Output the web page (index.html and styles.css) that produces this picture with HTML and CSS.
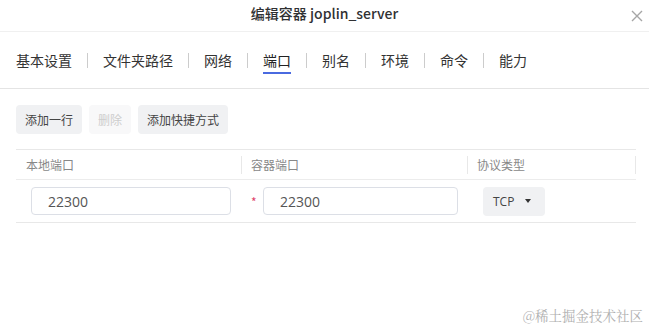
FILE: index.html
```html
<!DOCTYPE html>
<html lang="zh">
<head>
    <meta charset="UTF-8">
    <meta name="viewport" content="width=device-width, initial-scale=1.0">
    <title>编辑容器 joplin_server</title>
    <link rel="stylesheet" href="styles.css">
</head>
<body>
    <div class="dialog">
        <div class="dialog-header">
            <span class="dialog-title">编辑容器 joplin_server</span>
            <svg class="close" width="12" height="12" viewBox="0 0 12 12">
                <path d="M1 1L11 11M11 1L1 11" stroke="#a6a6a6" stroke-width="1.4" fill="none"/>
            </svg>
        </div>

        <div class="tabs">
            <span class="tab">基本设置</span>
            <span class="sep"></span>
            <span class="tab">文件夹路径</span>
            <span class="sep"></span>
            <span class="tab">网络</span>
            <span class="sep"></span>
            <span class="tab active">端口</span>
            <span class="sep"></span>
            <span class="tab">别名</span>
            <span class="sep"></span>
            <span class="tab">环境</span>
            <span class="sep"></span>
            <span class="tab">命令</span>
            <span class="sep"></span>
            <span class="tab">能力</span>
        </div>

        <div class="content">
            <div class="toolbar">
                <button class="btn">添加一行</button>
                <button class="btn" disabled>删除</button>
                <button class="btn">添加快捷方式</button>
            </div>

            <div class="table">
                <div class="row head">
                    <div class="cell c1">本地端口</div>
                    <div class="cell c2">容器端口</div>
                    <div class="cell c3">协议类型</div>
                </div>
                <div class="row body">
                    <div class="cell c1"><input class="field" type="text" value="22300"></div>
                    <div class="cell c2"><span class="req">*</span><input class="field" type="text" value="22300"></div>
                    <div class="cell c3">
                        <div class="select">TCP <span class="caret"></span></div>
                    </div>
                </div>
            </div>
        </div>

        <div class="watermark">@稀土掘金技术社区</div>
    </div>
</body>
</html>
```

FILE: styles.css
```css
* {
    box-sizing: border-box;
}
body {
    margin: 0;
    font-family: "Noto Sans CJK SC", "Noto Sans", sans-serif;
    color: #333;
    background: #fff;
}
.dialog {
    position: relative;
    width: 649px;
    height: 329px;
    overflow: hidden;
}
.dialog-header {
    position: relative;
    height: 32px;
    border-bottom: 1px solid #f0f0f0;
    text-align: center;
}
.dialog-title {
    display: inline-block;
    line-height: 26px;
    font-size: 14px;
    font-weight: 500;
    color: #303133;
}
.close {
    position: absolute;
    right: 6px;
    top: 10px;
}
.tabs {
    display: flex;
    align-items: center;
    height: 57px;
    padding: 0 16px 0 16px;
    border-bottom: 1px solid #e4e4e4;
}
.tab {
    position: relative;
    font-size: 14px;
    color: #333;
    line-height: 20px;
}
.tab.active {
    color: #222;
}
.tab.active::after {
    content: "";
    position: absolute;
    left: 0;
    right: 0;
    bottom: -4px;
    height: 2px;
    background: #4a6ae0;
}
.sep {
    width: 1px;
    height: 15px;
    margin: 0 15px;
    background: #ccc;
}
.content {
    padding: 16px 13px 0 16px;
}
.toolbar {
    display: flex;
    gap: 7px;
}
.btn {
    height: 29px;
    padding: 0 9px;
    border: none;
    border-radius: 4px;
    background: #f0f1f3;
    color: #444;
    font-family: inherit;
    font-size: 12px;
}
.btn:disabled {
    background: #f8f8f9;
    color: #cdcdcd;
}
.table {
    margin-top: 15px;
    border-top: 1px solid #e8e8e8;
}
.row {
    display: flex;
}
.row.head {
    height: 30px;
    border-bottom: 1px solid #ececec;
    font-size: 12px;
    color: #888;
}
.row.head .cell {
    display: flex;
    align-items: center;
    padding-left: 10px;
    position: relative;
}
.row.head .cell:not(:first-child)::before,
.row.head .c3::after {
    content: "";
    position: absolute;
    left: 0;
    top: 6px;
    height: 18px;
    width: 1px;
    background: #e8e8e8;
}
.row.head .c3::after {
    left: auto;
    right: 0;
}
.c1 {
    width: 225px;
}
.c2 {
    width: 226px;
}
.c3 {
    width: 169px;
}
.row.body {
    height: 43px;
    border-bottom: 1px solid #e8e8e8;
    align-items: center;
}
.row.body .c1 {
    padding: 0 10px 0 15px;
}
.row.body .c2 {
    display: flex;
    align-items: center;
    padding: 0 9px 0 10px;
}
.row.body .c3 {
    padding-left: 16px;
}
.field {
    width: 100%;
    height: 28px;
    padding: 0 16px;
    border: 1px solid #dcdfe6;
    border-radius: 4px;
    font-family: "Open Sans", "Noto Sans", sans-serif;
    font-size: 14px;
    color: #555;
    outline: none;
}
.req {
    width: 12px;
    flex: none;
    color: #e0436b;
    font-size: 12px;
}
.select {
    display: inline-flex;
    align-items: center;
    width: 62px;
    height: 29px;
    padding-left: 10px;
    border-radius: 4px;
    background: #f0f1f3;
    font-family: "Open Sans", "Noto Sans", sans-serif;
    font-size: 12px;
    color: #444;
}
.caret {
    margin-left: 11px;
    border-left: 3px solid transparent;
    border-right: 3px solid transparent;
    border-top: 4px solid #333;
}
.watermark {
    position: absolute;
    right: 6px;
    bottom: 4px;
    font-family: "Noto Serif CJK SC", "Liberation Serif", serif;
    font-size: 13.5px;
    color: #b0b0b0;
}
```
